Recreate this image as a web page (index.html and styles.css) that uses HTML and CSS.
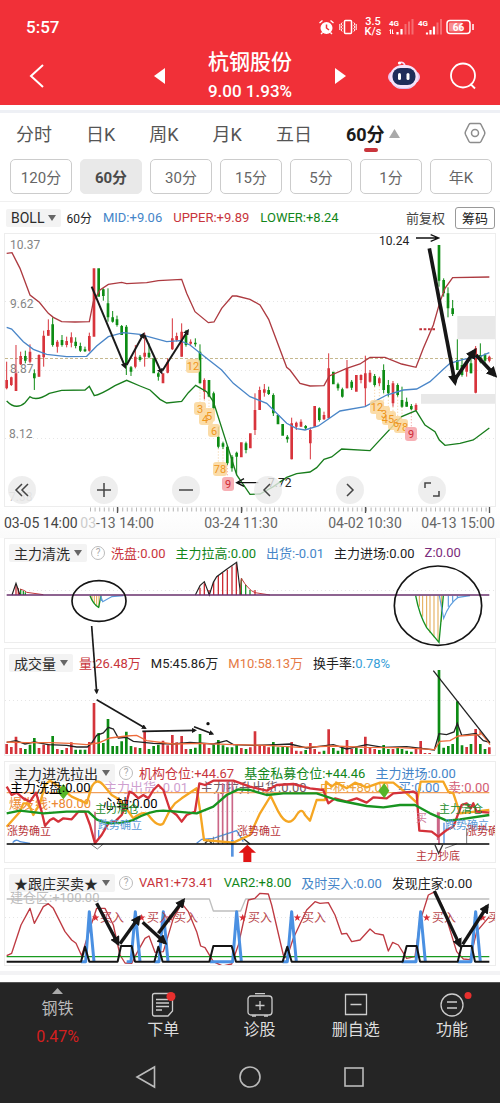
FILE: index.html
```html
<!DOCTYPE html>
<html lang="zh-CN">
<head>
<meta charset="utf-8">
<meta name="viewport" content="width=device-width, initial-scale=1">
<title>杭钢股份</title>
<link rel="stylesheet" href="styles.css">
</head>
<body>
<svg class="defs" width="0" height="0" aria-hidden="true">
  <defs>
    <marker id="head" viewBox="0 0 10 10" refX="6" refY="5" markerWidth="3" markerHeight="3" orient="auto"><path d="M0 0L10 5L0 10z" fill="#1a1a1a"/></marker>
    <marker id="head-lg" viewBox="0 0 10 10" refX="7" refY="5" markerWidth="3" markerHeight="3" orient="auto"><path d="M0 0L10 5L0 10z" fill="#161616"/></marker>
    <path id="star" d="M0-11L3-3.500H11L4.500 1.500L7 10L0 5L-7 10L-4.500 1.500L-11-3.500H-3z"/>
  </defs>
</svg>

<header class="top">
  <div class="status">
    <span class="clock">5:57</span>
    <div class="status-icons">
      <svg width="17" height="16" viewBox="0 0 16 16"><circle cx="8" cy="9" r="6" fill="#fff"/><path d="M8 5.500V9L10.500 11" fill="none" stroke="#f13038" stroke-width="1.500"/><path d="M1 4L4 1.500M15 4L12 1.500M4 13.500L2.500 15M12 13.500L13.500 15" stroke="#fff" stroke-width="1.400"/></svg>
      <svg width="18" height="16" viewBox="0 0 18 16"><rect x="5.500" y="1.500" width="7" height="13" rx="1" fill="none" stroke="#fff" stroke-width="1.500"/><path d="M3.200 3.500L2 5L3.200 6.500L2 8L3.200 9.500L2 11L3.200 12.500M.800 5V11M14.800 3.500L16 5L14.800 6.500L16 8L14.800 9.500L16 11L14.800 12.500M17.200 5V11" fill="none" stroke="#fff" stroke-width="1"/></svg>
      <span class="speed">3.5<br>K/s</span>
      <svg width="25" height="18" viewBox="0 0 25 18"><text class="net" x="0" y="8">4G</text><path d="M1.500 11.500V16M3.500 11.500V16M.500 12.500L1.500 11.500M4.500 15L3.500 16" stroke="#fff" stroke-width="1"/><path d="M8.500 14V16.500M12.500 11V16.500" stroke="#fff" stroke-width="2.200"/><path d="M16.500 6V16.500M20 3.500V16.500M23.500 1V16.500" stroke="#f66d72" stroke-width="2"/></svg>
      <svg width="24" height="18" viewBox="0 0 24 18"><text class="net" x="0" y="8">4G</text><path d="M9 14.500V16.500M12.500 12V16.500M16 8.500V16.500" stroke="#fff" stroke-width="2.200"/><path d="M19.500 4.500V16.500M23 1V16.500" stroke="#f66d72" stroke-width="2"/></svg>
      <svg width="29" height="16" viewBox="0 0 29 16"><rect x="1" y="1.500" width="23" height="13" rx="3" fill="none" stroke="#fff" stroke-width="1.500"/><rect x="3" y="3.500" width="13" height="9" rx="1" fill="#f88d90"/><path d="M27 5V11" stroke="#fff" stroke-width="1.500"/><text class="batt" x="12.500" y="12" text-anchor="middle">66</text></svg>
    </div>
  </div>
  <div class="titlebar">
    <button class="icon-btn back" aria-label="返回"><svg width="16" height="26" viewBox="0 0 16 26"><path d="M14 2L2 13L14 24" fill="none" stroke="#fff" stroke-width="2"/></svg></button>
    <div class="stock">
      <button class="icon-btn" aria-label="上一只"><svg width="11" height="16" viewBox="0 0 11 16"><path d="M11 0V16L0 8z" fill="#fff"/></svg></button>
      <div class="stock-name"><h1>杭钢股份</h1><p>9.00 1.93%</p></div>
      <button class="icon-btn" aria-label="下一只"><svg width="11" height="16" viewBox="0 0 11 16"><path d="M0 0V16L11 8z" fill="#fff"/></svg></button>
    </div>
    <div class="tools">
      <button class="icon-btn" aria-label="智能助手"><svg width="32" height="32" viewBox="0 0 32 32"><path d="M11 3Q16 1 17 6" fill="none" stroke="#f6d9f4" stroke-width="1.800"/><circle cx="11.500" cy="3" r="1.600" fill="#fff"/><rect x="0" y="11" width="32" height="12" rx="6" fill="#efc5ee"/><rect x="2" y="5" width="28" height="24" rx="12" fill="#f5e4fb"/><path d="M5 24Q16 33 27 24Q22 29 16 29Q10 29 5 24z" fill="#b79ae8"/><rect x="4.500" y="8" width="23" height="17" rx="8" fill="#1f2d5a"/><rect x="10" y="13" width="3" height="7" rx="1.500" fill="#fff"/><rect x="18.500" y="13" width="3" height="7" rx="1.500" fill="#fff"/></svg></button>
      <button class="icon-btn" aria-label="搜索"><svg width="26" height="28" viewBox="0 0 26 28"><circle cx="13" cy="13.500" r="12" fill="none" stroke="#fff" stroke-width="1.800"/><path d="M20.500 22L25 26.500" stroke="#fff" stroke-width="1.800"/></svg></button>
    </div>
  </div>
</header>

<main>
  <nav class="tabs">
    <button>分时</button><button>日K</button><button>周K</button><button>月K</button><button>五日</button>
    <button class="active">60分<svg width="11" height="9" viewBox="0 0 11 9"><path d="M5.500 0L11 9H0z" fill="#a9a9a9"/></svg></button>
    <button class="settings" aria-label="设置"><svg width="22" height="22" viewBox="0 0 22 22"><path d="M6.500 1.500H15.500Q16.500 1.500 17 2.500L20.500 9.500Q21.200 11 20.500 12.500L17 19.500Q16.500 20.500 15.500 20.500H6.500Q5.500 20.500 5 19.500L1.500 12.500Q.800 11 1.500 9.500L5 2.500Q5.500 1.500 6.500 1.500z" fill="none" stroke="#8c8c8c" stroke-width="1.500"/><circle cx="11" cy="11" r="3.500" fill="none" stroke="#8c8c8c" stroke-width="1.500"/></svg></button>
  </nav>
  <div class="periods">
    <button>120分</button><button class="active">60分</button><button>30分</button><button>15分</button><button>5分</button><button>1分</button><button>年K</button><button aria-label="季K"></button>
  </div>
  <div class="boll">
    <button class="picker">BOLL<i></i></button>
    <span class="period">60分</span>
    <span class="blue">MID:+9.06</span>
    <span class="red">UPPER:+9.89</span>
    <span class="green">LOWER:+8.24</span>
    <button class="plain">前复权</button>
    <button class="outlined">筹码</button>
  </div>

  <section class="panel kline">
    <svg class="chart" viewBox="5 4 490 272" role="img" aria-label="K线图">
      <path d="M5 71.500H495M5 140.500H495M5 208.500H495" stroke="#e6e6e6" stroke-dasharray="1 3"/>
      <g class="ylabels"><text x="10" y="19">10.37</text><text x="10" y="78">9.62</text><text x="10" y="143">8.87</text><text x="9" y="208">8.12</text><text x="9" y="271" opacity=".5">7.38</text></g>
      <path d="M5 128.500H495" stroke="#c5b88e" stroke-dasharray="3 2"/>
      <g transform="scale(.33333)" fill="none">
        <path fill="#e8e8e8" d="M1372 258H1485V328H1372zM1263 492H1485V521H1263z"/>
        <g stroke="#f0c48a" stroke-width="2" stroke-dasharray="4 5"><path d="M600 460V525M613 500V550M627 500V540M655 655V700M669 655V700M1124 470V515M1138 468V530M1151 490V540M1165 500V550M1179 530V570M1193 500V580M1206 530V590"/><path stroke="#e88" d="M682 705V745M1234 540V590"/></g>
        <path stroke="#d8343c" stroke-width="3" d="M20 395V478M34 440V468M48 345V483M62 365V405M90 343V400M117 373V440M131 302V410M145 268V317M172 330V368M200 320V352M214 307V352M268 308V365M406 345V415M434 308V410M503 385V430M517 265V360M530 308V335M545 280V380M572 328V345M613 445V508M765 490V615M779 470V540M793 462V500M875 563V688M889 575V600M903 568V590M931 592V688M972 545V570M986 370V565M1041 390V475M1083 433V460M1096 377V528M1110 420V458M1138 440V468M1179 453V530M1248 520V545M1400 388V440M1427 348V490M1468 377V397"/>
        <path stroke="#d8343c" stroke-width="8" d="M20 450V475M34 442V465M48 430V483M62 378V403M90 365V395M117 375V440M131 317V382M145 300V317M172 335V350M200 333V345M214 322V338M268 318V362M282 115V320M406 380V410M434 368V380M489 430V460M503 395V428M517 325V358M530 318V330M545 305V380M572 335V341M613 450V485M724 637V682M751 610V655M765 540V600M779 480V540M793 478V488M875 580V688M889 578V590M903 575V590M931 600V640M944 528V590M972 555V568M986 415V565M1041 415V475M1069 435V485M1083 435V450M1096 430V475M1110 428V455M1138 445V460M1179 460V520M1248 525V540M1400 400V425M1427 355V488M1468 380V392"/>
        <path stroke="#0d8c14" stroke-width="3" d="M76 362V400M103 418V480M158 262V350M186 315V350M227 322V355M241 338V366M255 350V366M310 175V212M324 175V275M338 243V278M351 257V290M365 285V315M379 285V435M393 408V438M420 375V395M447 340V385M475 425V452M558 300V350M586 325V350M600 343V460M641 485V540M655 590V655M669 635V657M682 645V705M696 675V725M710 665V735M738 635V670M806 470V495M820 490V558M862 615V638M917 585V600M958 532V575M1014 458V482M1027 473V503M1055 450V480M1124 432V470M1151 403V490M1165 450V500M1193 460V500M1206 470V533M1220 503V530M1234 522V540M1317 45V170M1331 145V200M1344 172V262M1358 210V258M1372 328V420M1386 385V440M1413 385V430M1441 340V400M1455 370V400"/>
        <path stroke="#0d8c14" stroke-width="8" d="M76 378V392M103 430V445M158 283V345M186 330V345M227 335V348M241 348V362M255 358V364M296 115V200M310 178V198M324 220V262M338 262V275M351 268V285M365 288V315M379 290V405M393 412V425M420 380V390M447 368V382M461 385V430M475 430V440M558 315V345M586 338V343M600 365V460M627 450V500M641 490V535M655 620V650M669 640V650M682 650V700M696 680V715M710 668V680M738 640V660M806 480V492M820 495V550M834 555V583M848 582V617M862 620V628M917 588V595M958 535V570M1000 425V463M1014 463V475M1027 478V500M1055 455V473M1124 438V465M1151 420V480M1165 465V490M1193 465V495M1206 510V530M1220 515V530M1234 528V538M1317 45V152M1331 150V190M1344 190V235M1358 235V252M1372 390V420M1386 405V435M1413 400V430M1441 375V395M1455 375V392"/>
        <path stroke="#ad3a40" stroke-width="4" d="M20 70L36 68L60 115L90 195L118 217L145 250L160 262L185 275L225 276L268 275L280 215L300 180L325 163L365 157L380 161L440 158L475 152L545 148L560 190L585 245L625 278L642 276L665 235L697 198L710 198L750 208L780 225L806 268L860 412L870 420L900 460L930 468L972 467L988 438L1040 415L1080 402L1110 382L1155 382L1205 402L1248 412L1270 355L1300 285L1320 215L1335 175L1358 143L1468 141"/>
        <path stroke="#4a86c8" stroke-width="4" d="M20 292L35 297L70 335L100 358L140 373L200 380L260 379L290 348L325 320L370 308L420 313L500 335L540 332L570 345L620 385L665 420L700 460L750 500L800 520L860 580L890 596L915 600L955 588L1020 543L1095 530L1160 495L1210 480L1250 477L1290 455L1330 418L1350 400L1390 388L1440 380L1468 368"/>
        <path stroke="#187d1c" stroke-width="4" d="M20 513Q48 542 75 518L90 500Q110 515 148 490L185 481L255 480L268 469L283 497Q300 495 345 467L380 451L420 468L450 480L480 508L500 519L545 514L565 488L587 466L620 485L640 515L680 640L710 735L750 793L780 792L820 770L860 742L890 731L930 726L950 713L972 688L995 681L1025 657L1110 662L1135 635L1205 560L1248 542L1275 585L1305 605L1318 630L1335 646L1380 640L1420 630L1468 594"/>
        <path stroke="#c03038" stroke-width="6" stroke-dasharray="8 5" d="M1258 298H1308"/>
        <g stroke="#1a1a1a" stroke-width="6"><path marker-end="url(#head)" d="M275 170L375 410"/><path marker-end="url(#head)" d="M380 405L430 313"/><path marker-end="url(#head)" d="M433 315L484 427"/><path marker-end="url(#head)" d="M487 422L563 303"/></g>
        <g stroke="#161616" stroke-width="11"><path marker-end="url(#head-lg)" d="M1288 55L1365 458"/><path marker-end="url(#head-lg)" d="M1365 448L1424 362"/><path marker-end="url(#head-lg)" d="M1428 375L1485 436"/></g>
        <path stroke="#111" stroke-width="4" d="M1248 24H1315M1292 14L1316 24L1292 34M775 758H712M732 746L710 758L732 769"/>
      </g>
      <g class="badges">
        <g fill="#fbd79a" opacity=".85"><rect x="186" y="129" width="14" height="14" rx="3"/><rect x="194" y="172" width="12" height="13" rx="3"/><rect x="199" y="182" width="14" height="13" rx="3"/><rect x="203" y="178" width="12" height="14" rx="3"/><rect x="208" y="194" width="12" height="13" rx="3"/><rect x="213" y="232" width="14" height="14" rx="3"/><rect x="370" y="170" width="14" height="14" rx="3"/><rect x="376" y="176" width="14" height="14" rx="3"/><rect x="382" y="181" width="14" height="14" rx="3"/><rect x="388" y="186" width="14" height="14" rx="3"/><rect x="394" y="189" width="14" height="14" rx="3"/></g>
        <g class="nums"><text x="193" y="140">12</text><text x="200" y="183">3</text><text x="205" y="193">4</text><text x="209" y="190">5</text><text x="214" y="205">6</text><text x="220" y="243">78</text><text x="377" y="181">12</text><text x="384" y="188">3</text><text x="388" y="193">45</text><text x="396" y="197">6</text><text x="402" y="201">78</text></g>
        <rect x="222" y="247" width="12" height="14" rx="3" fill="#f7b0b5"/><rect x="405" y="197" width="12" height="14" rx="3" fill="#f7b0b5"/>
        <g class="nine"><text x="228" y="258">9</text><text x="411" y="208">9</text></g>
      </g>
      <g class="marks"><text x="379" y="15">10.24</text><text x="268" y="257">7.72</text></g>
    </svg>
    <div class="controls">
      <button aria-label="最左"><svg viewBox="0 0 28 28"><path d="M14 8L8 14L14 20M20 8L14 14L20 20"/></svg></button>
      <button aria-label="放大"><svg viewBox="0 0 28 28"><path d="M14 7V21M7 14H21"/></svg></button>
      <button aria-label="缩小"><svg viewBox="0 0 28 28"><path d="M7 14H21"/></svg></button>
      <button aria-label="左移"><svg viewBox="0 0 28 28"><path d="M16 8L10 14L16 20"/></svg></button>
      <button aria-label="右移"><svg viewBox="0 0 28 28"><path d="M11 8L17 14L11 20"/></svg></button>
      <button aria-label="全屏"><svg viewBox="0 0 28 28"><path d="M7 12V7H13M21 15V20H15"/></svg></button>
    </div>
  </section>
  <svg class="axis" viewBox="0 0 500 31" role="img" aria-label="时间轴">
    <path d="M90 2.500H490" stroke="#b5b5b5" stroke-width="4" stroke-dasharray="1 3.600"/>
    <path d="M117.500 0V6M241.500 0V6M365.500 0V6M489.500 0V6" stroke="#555" stroke-width="1.300"/>
    <text x="4" y="21" class="dark">03-05 14:00</text><text x="154" y="21" text-anchor="end"><tspan fill="#ccc">03</tspan>-13 14:00</text><text x="241" y="21" text-anchor="middle">03-24 11:30</text><text x="365" y="21" text-anchor="middle">04-02 10:30</text><text x="495" y="21" text-anchor="end">04-13 15:00</text>
  </svg>

  <section class="panel">
    <svg class="chart" viewBox="5 4 490 103" role="img" aria-label="主力清洗">
      <path d="M5 55.500H495" stroke="#e6e6e6" stroke-dasharray="1 3"/>
      <g transform="scale(.33333)" fill="none">
        <path stroke="#cc2c34" stroke-width="4" d="M48 180V148M55 180V160M600 180V158M613 180V145M641 180V140M655 180V122M668 180V113M682 180V104M696 180V94M709 180V86M627 180V165M765 180V165"/>
        <path stroke="#19962a" stroke-width="4" d="M62 180V162M70 180V168M724 180V135M737 180V150M750 180V165M720 180L725 130M76 180V172"/>
        <path stroke="#222" stroke-width="3.500" d="M36 180L48 145L60 180M586 180L600 152L613 140L628 180L640 142L650 125L680 103L710 82L722 180"/>
        <path stroke="#c4383c" stroke-width="3" d="M60 162Q75 166 80 172L130 179M720 180L724 130Q745 165 765 173L810 180"/>
        <path stroke="#e2a64b" stroke-width="3" d="M276 182V195M283 182V205M290 182V212M297 182V216M1258 182V215M1268 182V245M1280 182V275M1290 182V294M1302 182V307M1314 182V318M1324 182V260"/>
        <path stroke="#149020" stroke-width="4" d="M270 182Q280 208 296 217L303 182M1247 182Q1258 240 1280 278L1317 322L1330 182"/>
        <path stroke="#5c9cdd" stroke-width="3.500" d="M302 182L308 200Q325 190 335 185L370 182M303 182V198M1318 182L1331 250Q1348 205 1375 187L1410 182M1345 182V215M1358 182V200M1372 182V190"/>
        <path stroke="#69306d" stroke-width="5" d="M20 180H1468"/>
        <g stroke="#151515" stroke-width="5"><ellipse cx="297" cy="198" rx="81" ry="61"/><ellipse cx="1314" cy="212" rx="131" ry="119"/></g>
      </g>
    </svg>
    <div class="legend"><button class="picker">主力清洗<i></i></button><b class="help">?</b><span class="red">洗盘:0.00</span><span class="green">主力拉高:0.00</span><span class="blue">出货:-0.01</span><span>主力进场:0.00</span><span class="purple">Z:0.00</span></div>
  </section>

  <section class="panel">
    <div class="legend"><button class="picker">成交量<i></i></button><span class="red">量:26.48万</span><span>M5:45.86万</span><span class="orange">M10:58.13万</span><span>换手率:<em>0.78%</em></span></div>
    <svg class="chart" viewBox="5 1 490 106" role="img" aria-label="成交量">
      <path d="M5 52.500H495" stroke="#e6e6e6" stroke-dasharray="1 3"/>
      <g transform="scale(.33333)" fill="none">
        <path stroke="#d4343b" stroke-width="8" d="M20 318V288M34 318V297M48 318V266M62 318V300M117 318V300M131 318V290M145 318V288M172 318V303M200 318V300M214 318V283M268 318V282M282 318V165M406 318V298M434 318V250M489 318V278M503 318V292M517 318V261M530 318V283M545 318V264M558 318V303M613 318V288M627 318V300M724 318V300M751 318V298M765 318V250M779 318V294M793 318V294M806 318V298M875 318V282M889 318V308M903 318V310M931 318V285M944 318V303M958 318V311M986 318V244M1041 318V276M1055 318V303M1096 318V266M1110 318V298M1124 318V303M1179 318V303M1248 318V303M1262 318V279M1275 318V315M1289 318V315M1400 318V297M1427 318V243M1468 318V298"/>
        <path stroke="#0d8c14" stroke-width="8" d="M76 318V303M90 318V290M103 318V270M158 318V264M186 318V306M227 318V305M241 318V305M255 318V305M296 318V255M310 318V285M324 318V213M338 318V294M351 318V294M365 318V280M379 318V251M393 318V294M420 318V300M447 318V303M461 318V294M475 318V290M572 318V303M586 318V299M600 318V258M641 318V290M655 318V276M669 318V292M682 318V298M696 318V298M710 318V292M738 318V303M820 318V282M834 318V298M848 318V296M862 318V294M917 318V306M972 318V308M1000 318V300M1014 318V308M1027 318V300M1069 318V298M1083 318V303M1138 318V306M1151 318V291M1165 318V303M1193 318V300M1206 318V303M1220 318V308M1234 318V311M1317 318V66M1331 318V299M1345 318V294M1358 318V288M1372 318V160M1386 318V292M1413 318V288M1441 318V288M1455 318V303"/>
        <path stroke="#222" stroke-width="4" d="M20 283L48 278L75 288L103 282L145 290L200 292L230 297L262 297L275 285L290 262L310 255L325 238L340 243L355 270L380 268L400 280L460 286L520 288L570 283L640 288L680 278L700 290L760 292L830 290L870 288L920 300L1000 290L1040 303L1100 290L1150 298L1220 296L1303 306L1317 257L1340 260L1362 252L1372 226L1385 262L1428 256L1450 278L1470 283"/>
        <path stroke="#ee6b3b" stroke-width="4" d="M20 282L75 284L150 284L210 286L260 290L295 285L330 270L380 264L410 262L440 278L520 288L600 286L700 290L800 292L900 298L1000 294L1100 298L1200 299L1303 305L1320 280L1350 278L1375 264L1440 260L1440 252L1462 278L1470 290"/>
        <g stroke="#1a1a1a" stroke-width="5"><path marker-end="url(#head)" d="M275-66L290 133"/><path marker-end="url(#head)" d="M290 155L435 240"/><path marker-end="url(#head)" d="M427 250L585 247"/><path marker-end="url(#head)" d="M582 236L637 257"/></g>
        <path stroke="#222" stroke-width="4" d="M1300 68L1470 284"/><circle cx="624" cy="227" r="5" fill="#111"/>
      </g>
    </svg>
  </section>

  <section class="panel clip">
    <div class="legend tight"><button class="picker">主力进洗拉出<i></i></button><b class="help">?</b><span class="red">机构仓位:+44.67</span><span class="green">基金私募仓位:+44.46</span><span class="blue">主力进场:0.00</span></div>
    <svg class="chart" viewBox="5 2 490 100" role="img" aria-label="主力进洗拉出">
      <path d="M5 51.500H495" stroke="#e6e6e6" stroke-dasharray="1 3"/>
      <g class="second"><text x="104" y="32" fill="#cf9fcf">主力出货:-0.01</text><text x="200" y="32" fill="#725c66">主力拉升出货:0.00</text><text x="320" y="32" fill="#eba344">中枢:+80.00</text><text x="398" y="32" fill="#4c87cc">买:0.00</text><text x="448" y="32" fill="#d35c74">卖:0.00</text><text x="9" y="48" fill="#ec8a35">爆发线:+80.00</text></g>
      <g transform="scale(.33333)" fill="none">
        <path stroke="#cb6687" stroke-width="5" d="M285 155V250M655 100V250M668 70V250M682 65V250M697 65V250M1317 157V255M1313 157V240"/>
        <path stroke="#5693df" stroke-width="4" d="M38 248Q48 235 60 245L90 250M590 250L605 238L640 235L710 212L730 245M296 210V235M1332 188V250"/>
        <path stroke="#5693df" stroke-width="8" d="M697 240V290"/>
        <path stroke="#777" stroke-width="3" d="M272 252L292 267L310 252M640 230V252M655 225V252M668 220V252M682 217V252M1400 205V250M1335 265L1370 252"/>
        <path stroke="#333" stroke-width="4" d="M615 250L625 240L635 250M725 232L750 252M1305 255L1316 280L1328 255"/>
        <path stroke="#f1a05b" stroke-width="4" d="M20 98H1468"/>
        <g stroke-linejoin="round" stroke-width="7">
          <path stroke="#f5a623" d="M20 200L60 155L70 130L85 130L100 165L120 130L135 75L150 62L175 78L215 110L260 130L275 80Q290 52 310 75L335 105L360 120L400 175Q430 150 445 165Q475 205 490 190L510 150L525 130L545 115L590 85L600 150L612 240L700 248L750 225L780 160L812 108L835 155Q865 210 890 165Q905 140 915 165L930 182L950 120L975 120L978 65L995 80L1010 68L1040 85L1065 68L1100 82L1140 68L1180 68L1220 100L1250 128L1262 65L1330 65L1345 95L1360 100L1380 160L1400 158L1468 150"/>
          <path stroke="#d4323a" d="M20 80L35 105L50 98L70 115L90 125L108 98L125 155L135 197L150 180L160 175L175 185L190 175L215 178L235 155L255 155L270 195L285 250L305 225L325 190L345 185L365 165L378 135L388 95L400 100L415 115L430 105L445 115L460 90L475 75L490 90L510 150L530 165L545 185L560 165L585 155L598 70L615 75L640 62L700 62L750 80L800 92L830 75L880 72L930 85L970 90L985 130L1005 115L1040 125L1070 115L1100 128L1120 112L1160 115L1180 100L1240 95L1250 100L1258 212L1295 215L1315 230L1340 210L1360 200L1375 160L1385 135L1400 130L1412 145L1420 130L1430 155L1468 158"/>
          <path stroke="#189420" d="M20 160L60 152L130 160L200 155L265 155L290 178Q335 200 400 180Q450 152 490 152L530 155L590 160L640 140L680 105L715 88L750 90L800 105L850 100L950 100L1010 120L1100 138L1150 142L1200 135L1245 135L1290 160L1340 182L1380 178L1468 165"/>
        </g>
        <path fill="#55b528" d="M172 95L190 72L208 95L190 118zM1135 92L1153 70L1168 92L1153 115z"/>
        <path stroke="#000" stroke-width="5" d="M20 252H1468"/>
        <path fill="#e01414" d="M742 254L768 278H754V306H730V278H716z"/>
      </g>
      <g class="second"><text x="10" y="32">主力洗盘:0.00</text><text x="103" y="48">心轴:0.00</text></g>
      <g class="notes"><text x="95" y="53" fill="#1c8c2c">主力清仓</text><text x="98" y="69" fill="#5a9bd8">跌势确立</text><text x="7" y="75" fill="#b8373c">涨势确立</text><text x="237" y="75" fill="#b8373c">涨势确立</text><text x="439" y="53" fill="#1c8c2c">主力清仓</text><text x="445" y="69" fill="#5a9bd8">跌势确立</text><text x="466" y="75" fill="#b8373c">涨势确立</text><text x="416" y="62" fill="#cf7f9d">买</text><text x="416" y="100" fill="#b8373c">主力抄底</text></g>
    </svg>
  </section>

  <section class="panel clip">
    <div class="legend"><button class="picker">★跟庄买卖★<i></i></button><b class="help">?</b><span class="red">VAR1:+73.41</span><span class="green">VAR2:+8.00</span><span class="blue">及时买入:0.00</span><span>发现庄家:0.00</span></div>
    <svg class="chart" viewBox="5 4 490 96" role="img" aria-label="跟庄买卖">
      <path d="M5 52.500H495" stroke="#e6e6e6" stroke-dasharray="1 3"/>
      <g class="second"><text x="10" y="37" fill="#bdbdbd">建仓区:+100.00</text></g>
      <g transform="scale(.33333)" fill="none" stroke-linejoin="round">
        <path stroke="#bfbfbf" stroke-width="4" d="M20 102H628L640 138H722L737 102H1468"/>
        <path stroke="#be3a42" stroke-width="4" d="M20 272L35 265L63 180L90 130L103 175L130 125L145 116L160 130L195 200L215 225L228 235L245 272L270 190L290 130L315 130L340 180L360 270L375 294L395 295L410 265L435 220L447 213L465 262L490 260L520 160L545 115L565 140L590 200L602 243L615 248L640 290L668 303L695 297L715 240L745 105L765 100L780 85L805 87L815 120L850 270L860 280L880 220L920 135L945 110L960 115L985 113L1005 150L1025 207L1040 205L1055 230L1080 225L1110 192L1125 205L1150 210L1165 258L1178 232L1195 240L1220 280L1245 275L1260 170L1285 90L1305 80L1330 130L1370 260L1390 282L1410 284L1430 200L1468 155"/>
        <path stroke="#199a20" stroke-width="4" d="M20 275H1468"/>
        <path stroke="#4a90e2" stroke-width="9" d="M243 290H257L268 140L282 290M380 290H393L406 140L420 290M463 290H477L490 140L504 290M630 290H698L710 140L724 290M848 290H862L875 140L889 290M1205 290H1248L1262 140L1276 290M1373 290H1413L1427 140L1441 290"/>
        <path stroke="#141414" stroke-width="6" d="M20 290H243L255 245L268 290H353L363 243H395L405 290H463L475 245L488 290H628L640 243H695L708 290H848L862 245L875 290H1208L1220 243H1250L1260 290H1373L1385 243H1415L1425 290H1468"/>
        <g fill="#d92d35"><use href="#star" x="287" y="158"/><use href="#star" x="425" y="158"/><use href="#star" x="510" y="158"/><use href="#star" x="728" y="158"/><use href="#star" x="892" y="158"/><use href="#star" x="1280" y="158"/><use href="#star" x="1448" y="158"/></g>
      </g>
      <g class="buys"><text x="100" y="57">买入</text><text x="147" y="57">买入</text><text x="174" y="57">买入</text><text x="248" y="57">买入</text><text x="302" y="57">买入</text><text x="432" y="57">买入</text><text x="488" y="57">买入</text></g>
      <g transform="scale(.33333)" fill="none" stroke="#161616" stroke-width="10"><path marker-end="url(#head-lg)" d="M290 115L354 236"/><path marker-end="url(#head-lg)" d="M360 236L417 157"/><path marker-end="url(#head-lg)" d="M428 172L495 233"/><path marker-end="url(#head-lg)" d="M475 205L550 106"/><path marker-end="url(#head-lg)" d="M1303 78L1380 242"/><path marker-end="url(#head-lg)" d="M1388 238L1462 123"/></g>
    </svg>
  </section>
  <div class="divider"></div>
</main>

<footer>
  <div class="actions">
    <button class="sector"><svg width="11" height="6" viewBox="0 0 11 6"><path d="M5.500 0L11 6H0z" fill="#aaa"/></svg><span>钢铁</span><span class="rate">0.47%</span></button>
    <button><svg width="26" height="26" viewBox="0 0 26 26"><path d="M4.500 1.500H20Q22.500 1.500 22.500 4V19L18 24H4.500Q2.500 24 2.500 22V3.500Q2.500 1.500 4.500 1.500zM6 7.500H18M6 11H19M6 14.500H19M6 18H12"/><circle cx="21" cy="4.500" r="4.500" class="dot"/></svg><span>下单</span></button>
    <button><svg width="26" height="26" viewBox="0 0 26 26"><rect x="1" y="4" width="24" height="19" rx="3"/><path d="M8 1.700H18M13 9V18M8.500 13.500H17.500M5 24H9M17 24H21"/></svg><span>诊股</span></button>
    <button><svg width="26" height="26" viewBox="0 0 26 26"><path d="M2.500 2.500H23.500V22.500H2.500zM7.500 12.500H18.500"/></svg><span>删自选</span></button>
    <button><svg class="wide" width="26" height="26" viewBox="0 0 26 26"><circle cx="13" cy="13" r="11"/><path d="M8 10H18M8 16H18"/><circle cx="29" cy="3.500" r="3.500" class="dot"/></svg><span>功能</span></button>
  </div>
  <nav class="system">
    <button aria-label="返回"><svg width="22" height="22" viewBox="0 0 22 22"><path d="M19.500 1V21L2 11z"/></svg></button>
    <button aria-label="主页"><svg width="22" height="22" viewBox="0 0 22 22"><circle cx="11" cy="11" r="10"/></svg></button>
    <button aria-label="最近任务"><svg width="22" height="22" viewBox="0 0 22 22"><rect x="2" y="2" width="18" height="18"/></svg></button>
  </nav>
</footer>
</body>
</html>
```

FILE: styles.css
```css
* { box-sizing: border-box; }
body {
  margin: 0;
  background: #fff;
  color: #222;
  font-family: Roboto, "Noto Sans CJK SC", sans-serif;
  font-size: 13px;
}
button {
  margin: 0;
  padding: 0;
  border: 0;
  background: none;
  color: inherit;
  font: inherit;
  white-space: nowrap;
}
svg { display: block; overflow: visible; }
.defs { position: absolute; }
h1, p { margin: 0; }

.red { color: #c8353c; }
.green { color: #12861a; }
.blue { color: #4585c8; }
.orange { color: #e57a45; }
.purple { color: #7b2c7c; }

.top { background: #f13038; color: #fff; }
.status {
  display: flex;
  align-items: center;
  justify-content: space-between;
  height: 46px;
  padding: 8px 25px 0 26px;
}
.clock { font-size: 17px; font-weight: 500; }
.status-icons { display: flex; align-items: center; gap: 4px; }
.speed {
  width: 24px;
  font-size: 11px;
  font-weight: 500;
  line-height: 10px;
  text-align: center;
}
.net { fill: #fff; font-size: 8px; font-weight: 700; }
.batt { fill: #fff; font-size: 10px; font-weight: 700; }
.titlebar {
  display: grid;
  grid-template-columns: 1fr auto 1fr;
  align-items: center;
  height: 59px;
  padding: 0 24px;
}
.stock { display: flex; align-items: center; gap: 43px; }
.stock-name { text-align: center; font-weight: 500; }
.stock-name h1 { font-size: 21px; font-weight: 500; line-height: 30px; }
.stock-name p { font-size: 17px; line-height: 28px; }
.back { justify-self: start; padding-left: 5px; }
.tools { display: flex; align-items: center; justify-content: flex-end; gap: 30px; }

main { padding-top: 5px; }
.tabs {
  display: flex;
  align-items: flex-start;
  gap: 34px;
  height: 49px;
  padding: 0 14px 0 16px;
  border-top: 3px solid #eef0f5;
  color: #555;
  font-size: 18px;
}
.tabs button { height: 40px; }
.tabs .active {
  display: flex;
  align-items: center;
  gap: 4px;
  position: relative;
  color: #1b1b1b;
  font-weight: 700;
}
.tabs .active::after {
  content: "";
  position: absolute;
  bottom: 1px;
  left: 18px;
  width: 14px;
  height: 4px;
  border-radius: 2px;
  background: #c9353b;
}
.tabs .settings { display: flex; align-items: center; margin-left: auto; }
.periods {
  display: flex;
  gap: 8px;
  padding-left: 10px;
  overflow: hidden;
}
.periods button {
  flex: 0 0 62px;
  height: 35px;
  border: 1px solid #ccc;
  border-radius: 5px;
  color: #666;
  font-size: 15px;
}
.periods .active {
  border-color: #e9e9e9;
  background: #e9e9e9;
  color: #4a4a4a;
  font-weight: 700;
}
.boll {
  display: flex;
  align-items: center;
  height: 32px;
  margin-top: 7px;
  padding: 0 5px 0 6px;
  border-top: 1px solid #f0f0f0;
}
.boll span { margin-right: 11px; }
.boll .period { margin-left: 5px; font-size: 12px; }
.picker {
  display: flex;
  align-items: center;
  gap: 4px;
  height: 18px;
  padding: 0 5px;
  border-radius: 2px;
  background: #f3f3f3;
  color: #2b2b2b;
  font-size: 14px;
}
.picker i {
  border: 4px solid transparent;
  border-top: 6px solid #666;
  border-bottom: 0;
}
.plain { margin-left: auto; color: #444; }
.outlined {
  height: 22px;
  margin-left: 10px;
  padding: 0 6px;
  border: 1px solid #999;
  border-radius: 3px;
}

.panel {
  display: grid;
  position: relative;
  margin: 0 4px 5px;
  border: 1px solid #ededed;
}
.chart, .legend { grid-area: 1 / 1; }
.chart { width: 100%; height: auto; }
.kline { margin-bottom: 0; }
.clip { overflow: hidden; }
.legend {
  display: flex;
  align-items: center;
  align-self: start;
  gap: 10px;
  padding: 4px 4px 0;
  white-space: nowrap;
}
.tight { padding-top: 1px; }
.legend em { color: #38a0d8; font-style: normal; }
.legend .picker + span { margin-left: -4px; }
.help {
  width: 14px;
  height: 14px;
  margin: 0 -4px 0 -6px;
  border: 1px solid #bbb;
  border-radius: 50%;
  color: #aaa;
  font-size: 10px;
  font-weight: 400;
  line-height: 12px;
  text-align: center;
}
.ylabels { fill: #858585; font-size: 12px; }
.marks { fill: #222; font-size: 12px; }
.badges { font-size: 11px; text-anchor: middle; }
.nums { fill: #ee961c; }
.nine { fill: #cf2934; }
.second { font-size: 13px; }
.notes { font-size: 11px; }
.buys { fill: #b8484d; font-size: 12px; }
.controls {
  position: absolute;
  bottom: 2px;
  left: 3px;
  display: flex;
  gap: 54px;
}
.controls button {
  width: 28px;
  height: 28px;
  border-radius: 50%;
  background: rgba(234, 234, 234, .8);
}
.controls path { fill: none; stroke: #444; stroke-width: 1.5; }
.axis {
  width: 100%;
  height: auto;
  background: linear-gradient(#fff, #fafafa);
  fill: #666;
  font-size: 14px;
}
.axis .dark { fill: #444; }
.divider { height: 4px; margin-bottom: 7px; background: #f3f3f5; }

footer { border-top: 1px solid #555; background: #252525; color: #ddd; }
.actions {
  display: grid;
  grid-template-columns: 115fr repeat(4, 96fr);
  height: 66px;
  font-size: 16px;
}
.actions button {
  display: flex;
  flex-direction: column;
  align-items: center;
  padding-top: 9px;
}
.actions span { line-height: 24px; }
.actions button svg { fill: none; stroke: #ccc; stroke-width: 1.3; }
.actions .dot { fill: #e8302e; stroke: none; }
.actions .sector { padding-top: 5px; color: #bbb; }
.actions .sector svg { margin-bottom: 3px; stroke: none; }
.actions .sector .rate { margin-top: 4px; color: #d41f1f; }
.system {
  display: flex;
  align-items: center;
  justify-content: center;
  gap: 82px;
  height: 55px;
}
.system svg { fill: none; stroke: #bbb; stroke-width: 1.6; }
```
